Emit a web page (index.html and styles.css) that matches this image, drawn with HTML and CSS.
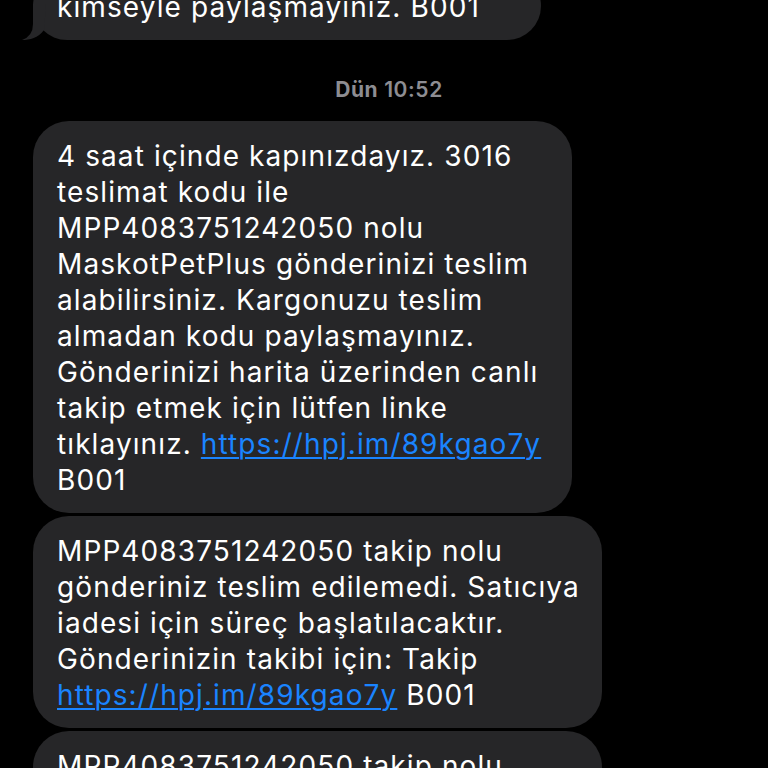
FILE: index.html
```html
<!DOCTYPE html>
<html lang="tr">
<head>
<meta charset="utf-8">
<title>Mesajlar</title>
<link rel="stylesheet" href="styles.css">
</head>
<body>
<div class="thread">
  <div class="bubble b1">
    <span class="line">kimseyle paylaşmayınız. B001</span>
    <svg class="tail" width="26" height="36" viewBox="0 0 26 36" aria-hidden="true">
      <path d="M11 0 L11 20 Q11 32 0 36 C8 36 16 34 22 26 L24 0 Z" fill="#262628"/>
    </svg>
  </div>
  <div class="stamp"><b>Dün</b> 10:52</div>
  <div class="bubble b2">
    <span class="line">4 saat içinde kapınızdayız. 3016</span>
    <span class="line">teslimat kodu ile</span>
    <span class="line">MPP4083751242050 nolu</span>
    <span class="line">MaskotPetPlus gönderinizi teslim</span>
    <span class="line">alabilirsiniz. Kargonuzu teslim</span>
    <span class="line">almadan kodu paylaşmayınız.</span>
    <span class="line">Gönderinizi harita üzerinden canlı</span>
    <span class="line">takip etmek için lütfen linke</span>
    <span class="line">tıklayınız. <a href="#">https://hpj.im/89kgao7y</a></span>
    <span class="line">B001</span>
  </div>
  <div class="bubble b3">
    <span class="line">MPP4083751242050 takip nolu</span>
    <span class="line">gönderiniz teslim edilemedi. Satıcıya</span>
    <span class="line">iadesi için süreç başlatılacaktır.</span>
    <span class="line">Gönderinizin takibi için: Takip</span>
    <span class="line"><a href="#">https://hpj.im/89kgao7y</a> B001</span>
  </div>
  <div class="bubble b3">
    <span class="line">MPP4083751242050 takip nolu</span>
    <span class="line">gönderiniz teslim edilemedi. Satıcıya</span>
  </div>
</div>
</body>
</html>
```
FILE: styles.css
```css
html, body {
  margin: 0;
  padding: 0;
  background: #000;
  height: 768px;
  overflow: hidden;
}

.thread {
  display: flex;
  flex-direction: column;
  align-items: flex-start;
  gap: 3px;
  padding-left: 33px;
  margin-top: -28px;
  font-family: "Inter", "Liberation Sans", sans-serif;
}

.bubble {
  position: relative;
  box-sizing: border-box;
  background: #262628;
  color: #fff;
  border-radius: 36px;
  padding: 17px 24px 15px;
  font-size: 28px;
  line-height: 36px;
  letter-spacing: 1.1px;
}

.line {
  display: block;
  white-space: nowrap;
}

.bubble a {
  color: #1a84ff;
  text-decoration: underline;
  text-decoration-thickness: 2px;
  text-underline-offset: 3px;
}

.b1 {
  width: 508px;
}

.b2 {
  width: 539px;
}

.b3 {
  width: 569px;
}

.tail {
  position: absolute;
  left: -11px;
  bottom: 0;
}

.stamp {
  align-self: stretch;
  box-sizing: border-box;
  padding-right: 23px;
  margin: 35px 0 16px;
  text-align: center;
  color: #8d8d92;
  font-size: 21px;
  line-height: 24px;
  font-weight: 600;
  letter-spacing: 0.6px;
}

.stamp b {
  font-weight: 700;
}
```
